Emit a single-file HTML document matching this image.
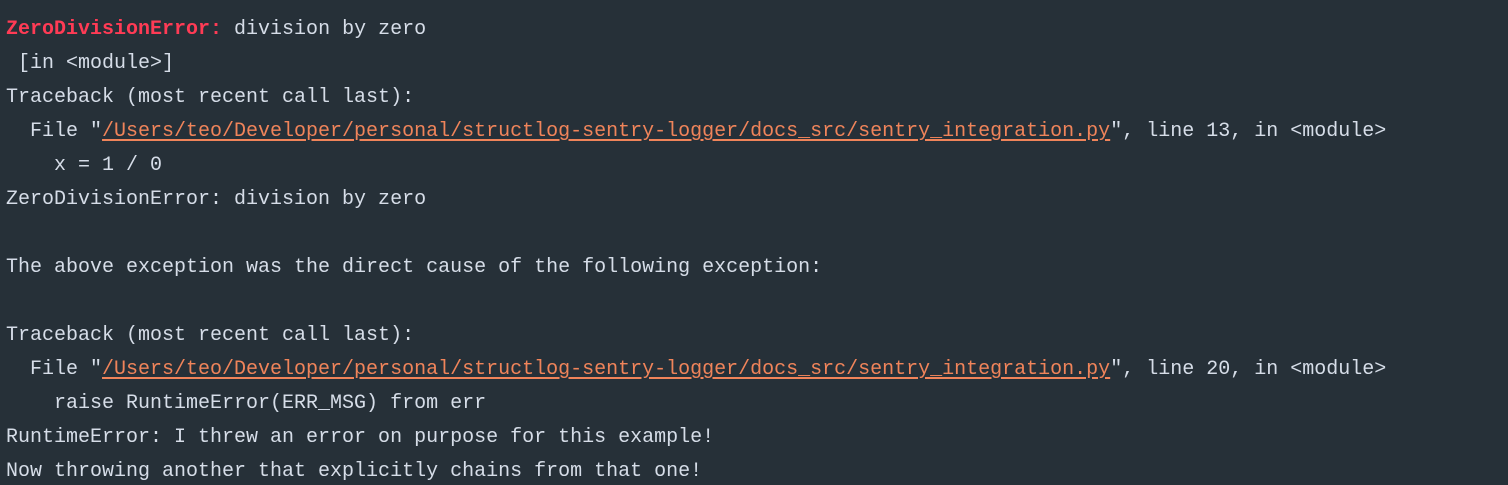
<!DOCTYPE html>
<html><head><style>
html,body{margin:0;padding:0;background:#263038;width:1508px;height:485px;overflow:hidden}
pre{margin:0;padding:13px 0 0 6px;font-family:"Liberation Mono",monospace;font-size:20px;line-height:34px;color:#d6dde8;white-space:pre}
.r{color:#ff3b55;font-weight:bold}
.l{color:#f0845a;text-decoration:underline;text-underline-offset:3px}
</style></head><body><pre><span class="r">ZeroDivisionError:</span> division by zero
 [in &lt;module&gt;]
Traceback (most recent call last):
  File "<span class="l">/Users/teo/Developer/personal/structlog-sentry-logger/docs_src/sentry_integration.py</span>", line 13, in &lt;module&gt;
    x = 1 / 0
ZeroDivisionError: division by zero

The above exception was the direct cause of the following exception:

Traceback (most recent call last):
  File "<span class="l">/Users/teo/Developer/personal/structlog-sentry-logger/docs_src/sentry_integration.py</span>", line 20, in &lt;module&gt;
    raise RuntimeError(ERR_MSG) from err
RuntimeError: I threw an error on purpose for this example!
Now throwing another that explicitly chains from that one!</pre></body></html>
